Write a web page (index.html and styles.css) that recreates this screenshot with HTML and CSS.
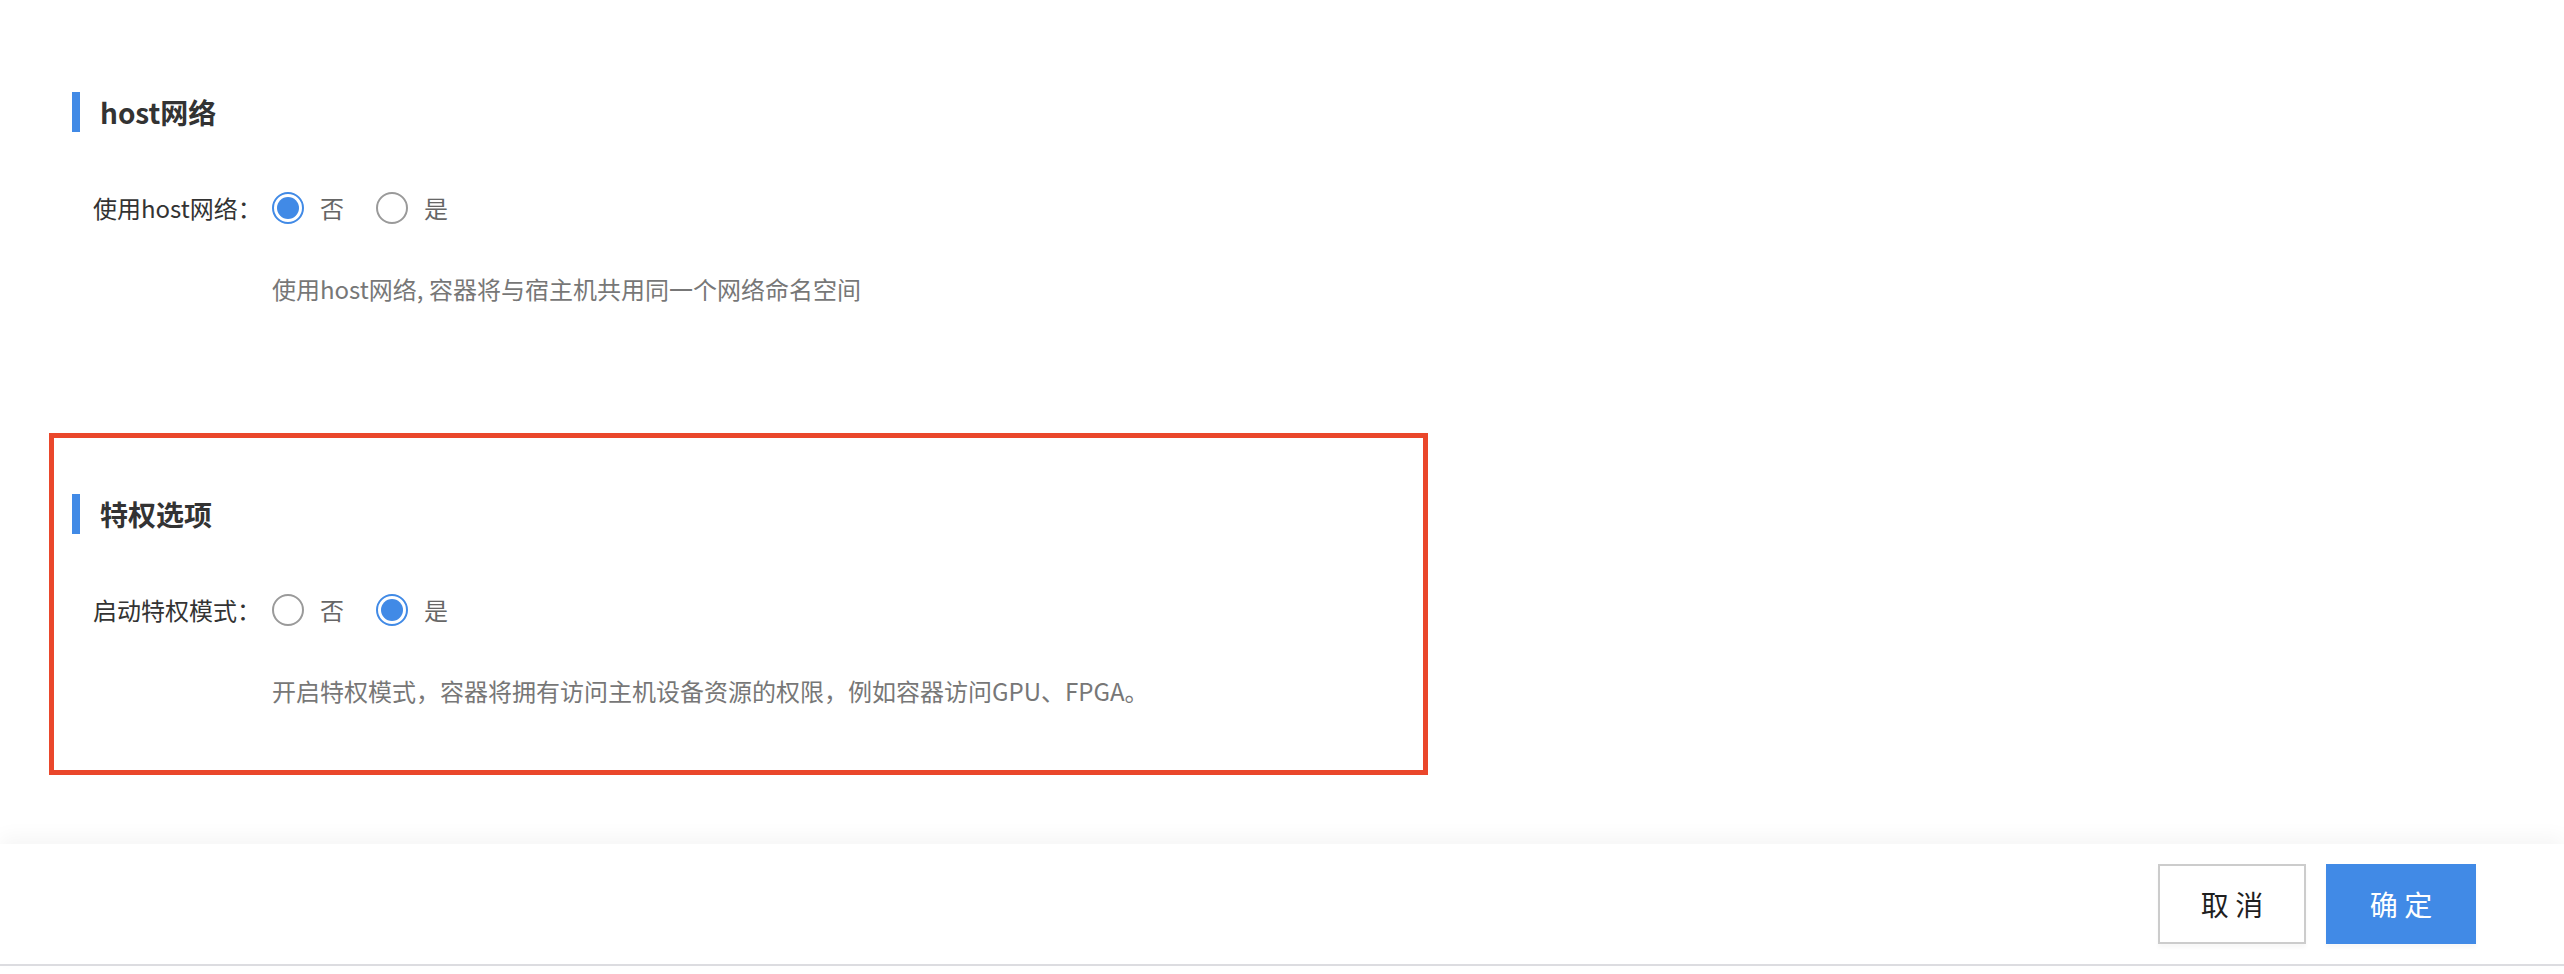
FILE: index.html
```html
<!DOCTYPE html>
<html lang="zh-CN">
<head>
<meta charset="utf-8">
<title>容器设置</title>
<link rel="stylesheet" href="styles.css">
</head>
<body>
<div class="page">
  <main class="content">
    <section class="section section-plain">
      <h2 class="section-title">host网络</h2>
      <div class="form-row">
        <label class="form-label">使用host网络：</label>
        <div class="radio-group">
          <span class="radio-item"><span class="radio checked"></span><span class="radio-text">否</span></span>
          <span class="radio-item"><span class="radio"></span><span class="radio-text">是</span></span>
        </div>
      </div>
      <p class="form-help">使用host网络, 容器将与宿主机共用同一个网络命名空间</p>
    </section>

    <section class="section section-boxed">
      <h2 class="section-title">特权选项</h2>
      <div class="form-row">
        <label class="form-label">启动特权模式：</label>
        <div class="radio-group">
          <span class="radio-item"><span class="radio"></span><span class="radio-text">否</span></span>
          <span class="radio-item"><span class="radio checked"></span><span class="radio-text">是</span></span>
        </div>
      </div>
      <p class="form-help">开启特权模式，容器将拥有访问主机设备资源的权限，例如容器访问GPU、FPGA。</p>
    </section>
  </main>

  <footer class="footer">
    <button class="btn btn-default">取 消</button>
    <button class="btn btn-primary">确 定</button>
  </footer>
</div>
</body>
</html>
```

FILE: styles.css
```css
* {
  box-sizing: border-box;
}

html, body {
  margin: 0;
  padding: 0;
  background: #ffffff;
}

body {
  font-family: "Noto Sans CJK SC", "Noto Sans", sans-serif;
  color: #333333;
}

.page {
  height: 974px;
  display: flex;
  flex-direction: column;
}

.content {
  flex: 1;
  padding-top: 92px;
  background: #ffffff;
}

.section-plain {
  padding-left: 72px;
}

.section-boxed {
  margin: 129px 0 0 49px;
  width: 1379px;
  border: 5px solid #ea472b;
  padding: 56px 0 64px 18px;
}

.section-title {
  margin: 0;
  height: 40px;
  display: flex;
  align-items: center;
  border-left: 8px solid #418ae6;
  padding-left: 20px;
  font-size: 28px;
  font-weight: 700;
  color: #333333;
  line-height: 40px;
}

.form-row {
  margin-top: 56px;
  height: 40px;
  display: grid;
  grid-template-columns: 200px auto;
  align-items: center;
}

.form-label {
  padding-left: 21px;
  font-size: 24px;
  color: #333333;
  line-height: 40px;
  white-space: nowrap;
}

.radio-group {
  display: flex;
  align-items: center;
}

.radio-item {
  display: flex;
  align-items: center;
  margin-right: 32px;
}

.radio {
  width: 32px;
  height: 32px;
  border-radius: 50%;
  border: 2px solid #9a9a9a;
  background: #ffffff;
  display: flex;
  align-items: center;
  justify-content: center;
}

.radio.checked {
  border-color: #418ae6;
}

.radio.checked::after {
  content: "";
  width: 22px;
  height: 22px;
  border-radius: 50%;
  background: #418ae6;
}

.radio-text {
  margin-left: 16px;
  font-size: 24px;
  color: #666666;
  line-height: 40px;
}

.form-help {
  margin: 46px 0 0 200px;
  font-size: 24px;
  line-height: 30px;
  color: #777777;
}

.footer {
  height: 122px;
  margin-bottom: 8px;
  border-bottom: 2px solid #dcdce0;
  background: #ffffff;
  box-shadow: 0 -8px 18px rgba(0, 0, 0, 0.04);
  display: flex;
  justify-content: flex-end;
  align-items: center;
  gap: 20px;
  padding-right: 88px;
}

.btn {
  height: 80px;
  font-family: "Noto Sans CJK SC", sans-serif;
  font-size: 28px;
  cursor: pointer;
  box-shadow: 0 4px 4px rgba(0, 0, 0, 0.03);
}

.btn-default {
  width: 148px;
  background: #ffffff;
  border: 2px solid #cccccc;
  color: #1f1f1f;
}

.btn-primary {
  width: 150px;
  background: #418ae6;
  border: none;
  color: #ffffff;
}
```
